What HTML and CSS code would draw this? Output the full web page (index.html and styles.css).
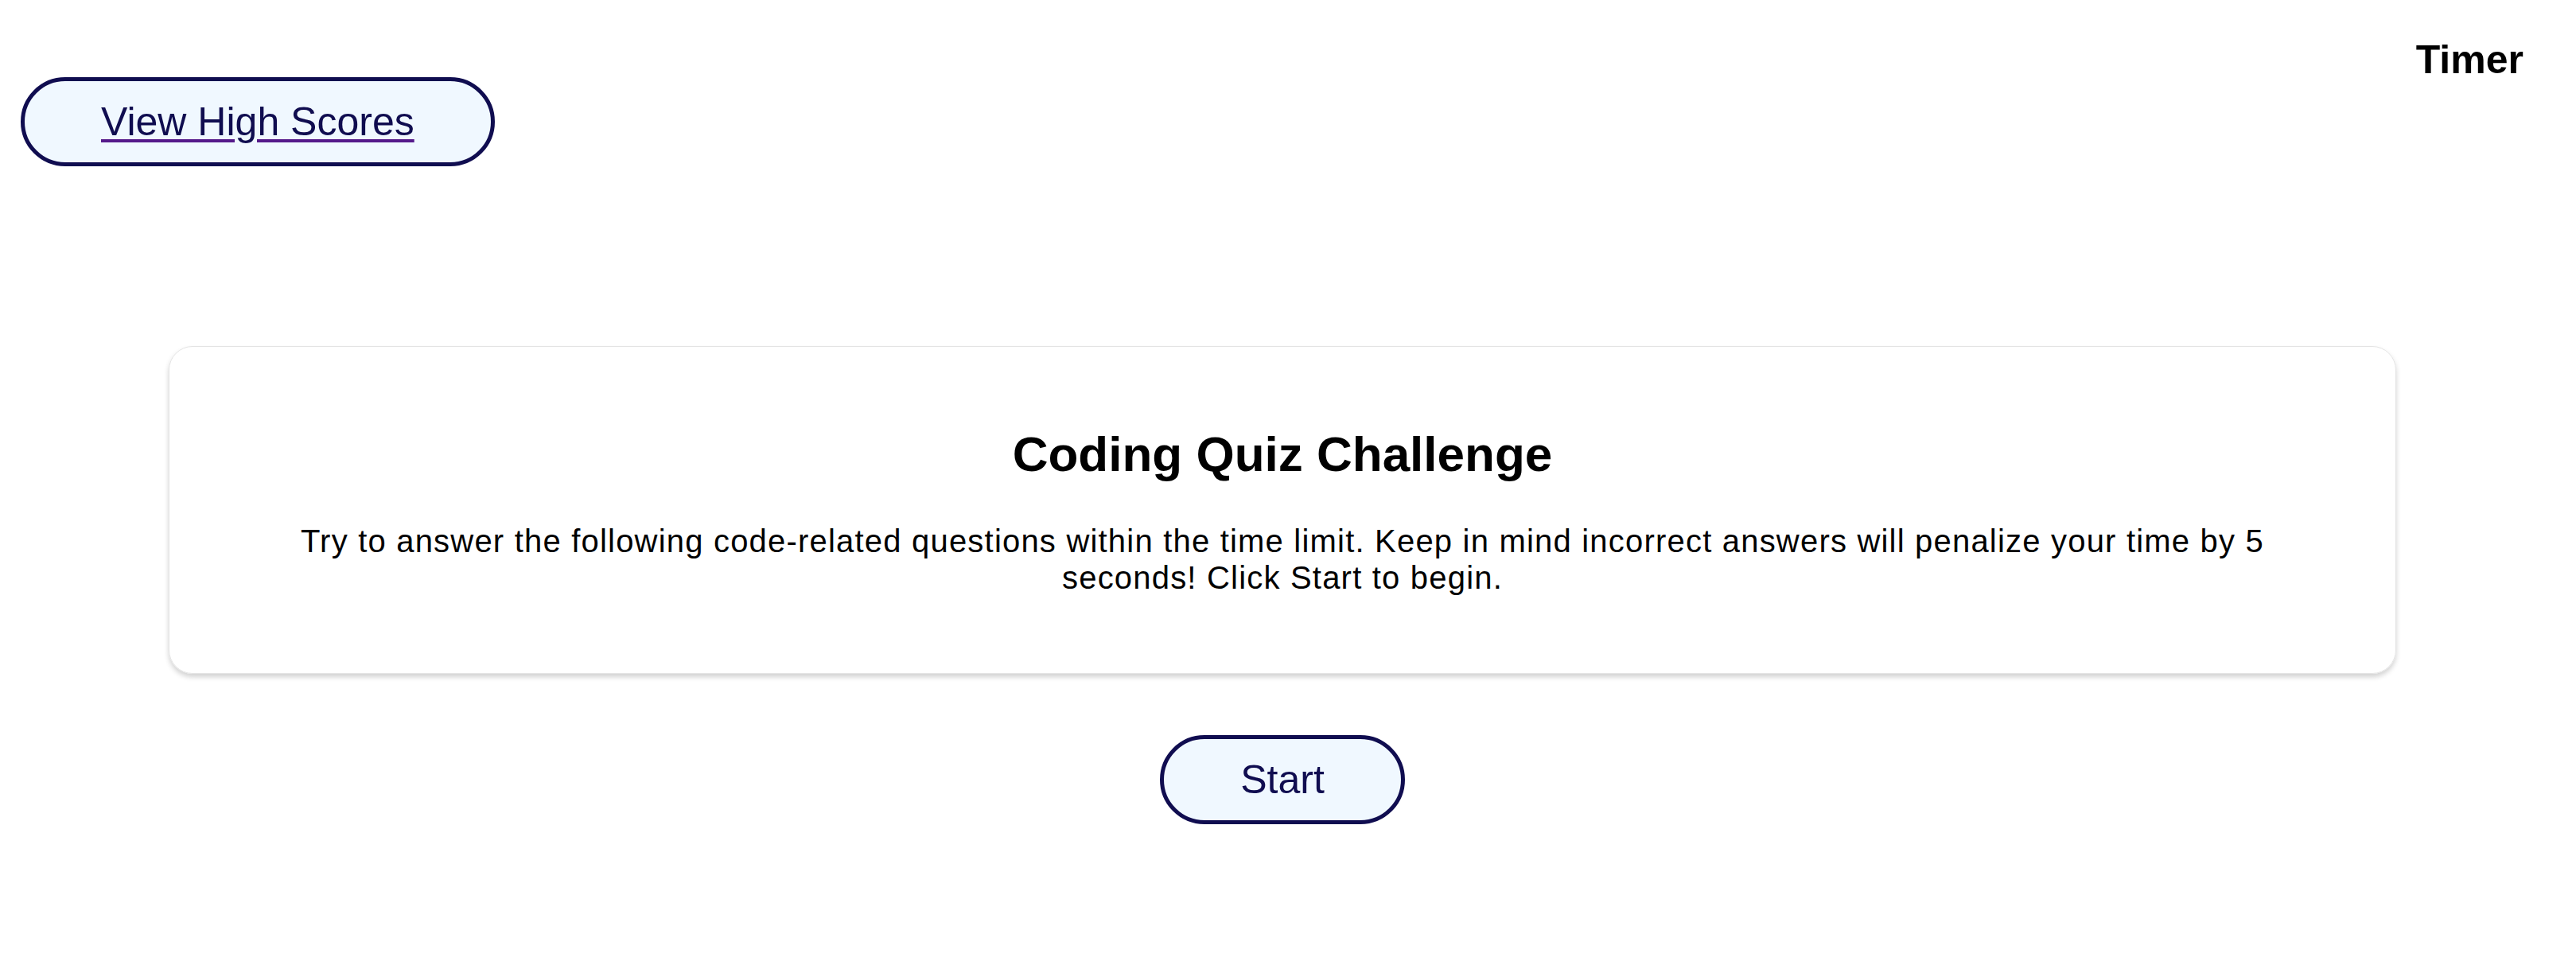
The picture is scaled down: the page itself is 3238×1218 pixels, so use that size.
FILE: index.html
```html
<!DOCTYPE html>
<html lang="en">
<head>
<meta charset="utf-8">
<title>Coding Quiz Challenge</title>
<link rel="stylesheet" href="styles.css">
</head>
<body>
<header class="top-bar">
  <a class="pill-btn scores-link" href="#"><span class="scores-text">View High Scores</span></a>
  <div class="timer">Timer</div>
</header>
<main class="main">
  <section class="card">
    <h1 class="card-title">Coding Quiz Challenge</h1>
    <p class="card-text">Try to answer the following code-related questions within the time limit. Keep in mind incorrect answers will penalize your time by 5 seconds! Click Start to begin.</p>
  </section>
  <div class="actions">
    <button class="pill-btn start-btn" type="button">Start</button>
  </div>
</main>
</body>
</html>
```

FILE: styles.css
```css
html, body {
  margin: 0;
  padding: 0;
  background: #ffffff;
}

body {
  font-family: "Liberation Sans", Arial, sans-serif;
  color: #000000;
}

.top-bar {
  display: flex;
  justify-content: space-between;
  align-items: flex-start;
}

.pill-btn {
  display: inline-block;
  box-sizing: border-box;
  font-family: "Liberation Sans", Arial, sans-serif;
  font-size: 50px;
  line-height: 58px;
  color: #100d50;
  background: #f0f8ff;
  border: 5px solid #100d50;
  border-radius: 999px;
  padding: 22px 96px;
}

.scores-link {
  margin: 97px 0 0 26px;
  text-decoration: underline;
  text-decoration-color: #551a8b;
  text-decoration-thickness: 4px;
  text-underline-offset: 5px;
}

.scores-text {
  color: #100d50;
}

.timer {
  margin: 47px 66px 0 0;
  font-size: 50px;
  font-weight: bold;
  line-height: 57px;
}

.main {
  padding: 0 226px 0 212px;
}

.card {
  margin-top: 226px;
  border: 1px solid #e4e4e4;
  border-radius: 30px;
  box-shadow: 0 4px 6px rgba(0, 0, 0, 0.18);
  padding: 99px 150px 97px;
  text-align: center;
}

.card-title {
  margin: 0 0 51px;
  font-size: 62px;
  font-weight: bold;
  line-height: 71px;
}

.card-text {
  margin: 0;
  font-size: 40px;
  line-height: 46px;
  letter-spacing: 1.2px;
}

.actions {
  display: flex;
  justify-content: center;
  margin-top: 77px;
}

.start-btn {
  cursor: pointer;
}
```
